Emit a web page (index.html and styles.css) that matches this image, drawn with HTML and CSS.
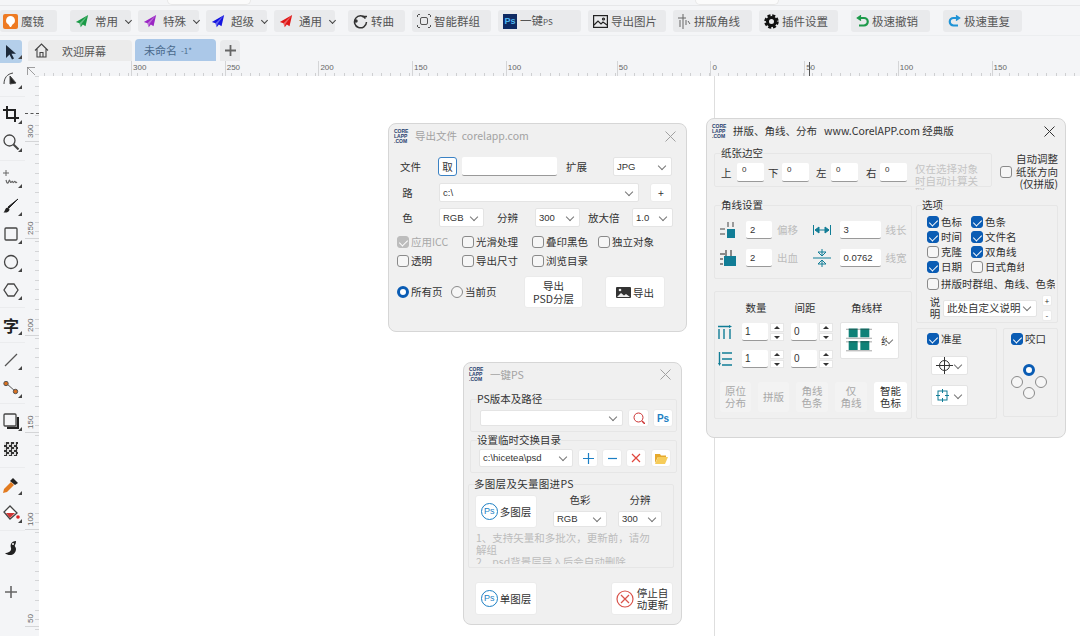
FILE: index.html
```html
<!DOCTYPE html>
<html lang="zh-CN">
<head>
    <meta charset="UTF-8">
    <title>CorelDRAW 插件</title>
    <link rel="stylesheet" href="styles.css">
</head>
<body>
    <svg class="defs" width="0" height="0">
        <symbol id="plane" viewBox="0 0 16 16"><path d="M15 1 1 9l4 1.5L6.500 15l2.500-3 3 2z" fill="currentColor"/><path d="M15 1 5 10.500l1.500 4.500 1-4z" fill="#fff" opacity=".35"/></symbol>
        <symbol id="close" viewBox="0 0 11 11"><path d="m.5.5 10 10M10.500.5l-10 10" fill="none" stroke="currentColor"/></symbol>
    </svg>

    <div class="top-strip"><span class="strip-tab tab-a"></span><span class="strip-tab tab-b"></span></div>

    <div class="toolbar">
        <div class="tool-btn w57 first"><svg width="15" height="15" viewBox="0 0 15 15"><rect width="15" height="15" rx="2" fill="#ee7a22"/><path d="M7.500 2a4.500 4.500 0 0 1 2 8.500L8 13H7l-1.500-2.500A4.500 4.500 0 0 1 7.500 2z" fill="#fff"/></svg><span>魔镜</span></div>
        <div class="tool-btn w61 gap-l"><svg class="c-green" width="14" height="14"><use href="#plane"/></svg><span class="pad-l">常用</span><i class="chev"></i></div>
        <div class="tool-btn w61"><svg class="c-purple" width="14" height="14"><use href="#plane"/></svg><span class="pad-l">特殊</span><i class="chev"></i></div>
        <div class="tool-btn w61"><svg class="c-blue" width="14" height="14"><use href="#plane"/></svg><span class="pad-l">超级</span><i class="chev"></i></div>
        <div class="tool-btn w61"><svg class="c-red" width="14" height="14"><use href="#plane"/></svg><span class="pad-l">通用</span><i class="chev"></i></div>
        <div class="tool-btn w57 gap-l"><svg width="15" height="15" viewBox="0 0 15 15" fill="none" stroke="#333" stroke-width="1.500"><path d="M12.500 4.500A6 6 0 1 0 13.500 8"/><path d="M9 2.500h5"/><circle cx="3" cy="7" r="1" fill="#333"/></svg><span>转曲</span></div>
        <div class="tool-btn w79"><svg width="14" height="14" viewBox="0 0 14 14" fill="none" stroke="#555"><rect x="3.500" y="3.500" width="7" height="7" rx="1.500"/><path d="M.5 3V.5H3M11 .5h2.500V3M13.500 11v2.500H11M3 13.500H.5V11" stroke-dasharray="2 1"/></svg><span>智能群组</span></div>
        <div class="tool-btn w83"><span class="ps-logo">Ps</span><span>一键<small>PS</small></span></div>
        <div class="tool-btn w78"><svg width="15" height="13" viewBox="0 0 15 13" fill="none" stroke="#222" stroke-width="1.200"><rect x=".6" y=".6" width="13.800" height="11.800"/><path d="m1 10 4-4 3 3 2-2 4 3"/><circle cx="10.500" cy="4" r="1"/></svg><span>导出图片</span></div>
        <div class="tool-btn w79"><svg width="13" height="15" viewBox="0 0 13 15" fill="none" stroke="#666"><path d="M5 0v15M0 4h8M2 6v7M8 6v5M10 7l2 3"/></svg><span>拼版角线</span></div>
        <div class="tool-btn w79"><svg width="15" height="15" viewBox="0 0 15 15" fill="none" stroke="#111"><circle cx="7.500" cy="7.500" r="4" stroke-width="3"/><circle cx="7.500" cy="7.500" r="6" stroke-width="2.500" stroke-dasharray="3 1.710"/></svg><span>插件设置</span></div>
        <div class="tool-btn w79 gap-l"><svg width="13" height="13" viewBox="0 0 13 13" fill="none" stroke="#1d9a4a" stroke-width="2.200"><path d="M4 3h4a3.500 3.500 0 0 1 0 7.500H3"/><path d="M5 .5 1.500 3 5 5.500" stroke-width="1.500" fill="#1d9a4a"/></svg><span>极速撤销</span></div>
        <div class="tool-btn w79 gap-l"><svg width="13" height="13" viewBox="0 0 13 13" fill="none" stroke="#1f93d6" stroke-width="2.200"><path d="M9 3H5.500a3.500 3.500 0 0 0 0 7.500H10"/><path d="m8 .5 3.500 2.500L8 5.500" stroke-width="1.500" fill="#1f93d6"/></svg><span>极速重复</span></div>
    </div>

    <div class="main">
        <div class="sidebar">
            <div class="side-item active"><svg width="14" height="16" viewBox="0 0 14 16"><path d="M2 1v13l3.500-3.500 2.500 5 2-1-2.500-4.800H12z" fill="#1d2a3a"/></svg></div>
            <div class="side-item"><svg width="16" height="16" viewBox="0 0 16 16" fill="none" stroke="#444"><path d="M1 13c0-6 3-10 9-11"/><path d="m7 5 6 7-6 1z" fill="#222"/></svg></div>
            <div class="side-item group-start"><svg width="16" height="16" viewBox="0 0 16 16" fill="none" stroke="#222" stroke-width="2"><path d="M4 0v12h12M0 4h12v12"/></svg></div>
            <div class="side-item"><svg width="16" height="16" viewBox="0 0 16 16" fill="none" stroke="#444" stroke-width="1.300"><circle cx="6.500" cy="6.500" r="5.500"/><path d="m10.500 10.500 5 5" stroke-width="2"/></svg></div>
            <div class="side-item group-start wide-gap"><svg width="17" height="16" viewBox="0 0 17 16" fill="none" stroke="#666"><path d="M3 0v6M0 3h6"/><path d="M3 10c1 4 2 4 3 1s1 3 2.500 1 1 2 2.500 0 1 2 3 0" stroke-width="1.200"/></svg></div>
            <div class="side-item"><svg width="16" height="16" viewBox="0 0 16 16"><path d="M15 1 6 10l-1-1z" fill="#222" stroke="#222"/><path d="M5 9.500c-3 0-2.500 3-4.500 5 3 .5 6-.5 6-3.500z" fill="#222"/></svg></div>
            <div class="side-item"><svg width="15" height="15" viewBox="0 0 15 15" fill="none" stroke="#444" stroke-width="1.300"><rect x="1" y="1" width="12" height="12" rx="1"/></svg></div>
            <div class="side-item"><svg width="16" height="16" viewBox="0 0 16 16" fill="none" stroke="#444" stroke-width="1.300"><circle cx="8" cy="8" r="6.500"/></svg></div>
            <div class="side-item"><svg width="16" height="16" viewBox="0 0 16 16" fill="none" stroke="#444" stroke-width="1.300"><path d="M5 2h6l4 6-4 6H5L1 8z"/></svg></div>
            <div class="side-item group-start text-tool">字</div>
            <div class="side-item group-start"><svg width="14" height="14" viewBox="0 0 14 14" stroke="#555" stroke-width="1.200"><path d="M1 13 13 1"/></svg></div>
            <div class="side-item"><svg width="16" height="14" viewBox="0 0 16 14" stroke="#555"><path d="m3 2 10 9"/><circle cx="3" cy="2.500" r="2.200" fill="#d9701f"/><circle cx="12.500" cy="10.500" r="2.200" fill="#d9701f"/></svg></div>
            <div class="side-item group-start small-gap"><svg width="16" height="16" viewBox="0 0 16 16" fill="none"><path d="M4 15h11V4" stroke="#222" stroke-width="2.500"/><rect x="1" y="1" width="12" height="12" rx="1" stroke="#444" stroke-width="1.300"/></svg></div>
            <div class="side-item no-corner"><i class="checker"></i></div>
            <div class="side-item group-start wide-gap"><svg width="16" height="16" viewBox="0 0 16 16"><path d="M10 1l5 5-3 2-5-4z" fill="#222"/><path d="M8 5 1 12l-1 4 4-1 7-7z" fill="#e27b20"/></svg></div>
            <div class="side-item"><svg width="17" height="16" viewBox="0 0 17 16"><path d="M7 1 1 7l6 7 7-6z" fill="#fff" stroke="#444" stroke-width="1.300"/><path d="M3 8h9l-5 5z" fill="#cf3535"/><circle cx="15" cy="12" r="1.800" fill="#d22"/></svg></div>
            <div class="side-item group-start no-corner"><svg width="14" height="17" viewBox="0 0 14 17"><path d="M12 1C7 1 6 5 7 8c1 3-3 5-6 5 4 4 11 2 11-4 0-2-2-3-1-4 .5-1 1-2 1-4z" fill="#222"/><circle cx="9" cy="4" r="1" fill="#fff"/></svg></div>
            <div class="side-item add-tool no-corner"><svg width="12" height="12" viewBox="0 0 12 12" stroke="#666" stroke-width="1.600"><path d="M6 0v12M0 6h12"/></svg></div>
        </div>

        <div class="workspace">
            <div class="tabs">
                <div class="tab home-tab"><svg width="15" height="15" viewBox="0 0 15 15" fill="none" stroke="#444" stroke-width="1.100"><path d="M1 7.500 7.500 1 14 7.500M3 6v8h9V6M6 14V9.500h3V14"/></svg><span>欢迎屏幕</span></div>
                <div class="tab current-tab">未命名 <small>-1*</small></div>
                <div class="tab new-tab"><svg width="11" height="11" viewBox="0 0 11 11" stroke="#666" stroke-width="1.800"><path d="M5.500 0v11M0 5.500h11"/></svg></div>
            </div>
            <div class="h-ruler">
                <span class="ruler-corner"><svg width="9" height="9" viewBox="0 0 9 9" fill="none" stroke="#888"><path d="M0 .5h8M.5 0v8M1 1l7 7" stroke-width=".8"/></svg></span>
                <span class="h-first"></span>
                <span class="h-cell">300</span><span class="h-cell">250</span><span class="h-cell">200</span><span class="h-cell">150</span><span class="h-cell h-wide">100</span><span class="h-cell">50</span><span class="h-cell">0</span><span class="h-cell">50</span><span class="h-cell">100</span><span class="h-cell">150</span>
                <i class="h-marker"></i>
            </div>
            <div class="canvas-row">
                <div class="v-ruler">
                    <span class="v-first">300</span><span class="v-cell">250</span><span class="v-cell">200</span><span class="v-cell">150</span><span class="v-cell">100</span><span class="v-cell">50</span>
                    <i class="v-marker"></i>
                </div>
                <div class="canvas"><i class="page-edge"></i></div>
            </div>
        </div>
    </div>

    <!-- 导出文件 -->
    <div class="dialog export-dialog">
        <div class="dlg-title faded">
            <span class="logo">CORE<br>LAPP<br>.COM</span>
            <span class="title-text">导出文件&nbsp; corelapp.com</span>
            <svg class="close" width="11" height="11"><use href="#close"/></svg>
        </div>
        <div class="export-body">
            <div class="row h19 mt6">
                <label class="w38">文件</label><button class="btn blue-outline w19 fill-h">取</button><div class="input w95 ml5 fill-h"></div>
                <label class="w47 ml9">扩展</label><div class="select w59 fill-h">JPG</div>
            </div>
            <div class="row h19 mt7">
                <label class="w39">&nbsp;路</label><div class="select w200 fill-h">c:\</div><button class="btn w22 ml11 fill-h">+</button>
            </div>
            <div class="row h19 mt6">
                <label class="w39">&nbsp;色</label><div class="select w45 fill-h">RGB</div>
                <label class="w38 ml13">分辨</label><div class="select w45 fill-h">300</div>
                <label class="w44 ml8">放大倍</label><div class="select w41 fill-h">1.0</div>
            </div>
            <div class="check-grid export-checks">
                <label class="chk muted"><i class="cb disabled"></i>应用ICC</label>
                <label class="chk"><i class="cb"></i>光滑处理</label>
                <label class="chk"><i class="cb"></i>叠印黑色</label>
                <label class="chk"><i class="cb"></i>独立对象</label>
                <label class="chk"><i class="cb"></i>透明</label>
                <label class="chk"><i class="cb"></i>导出尺寸</label>
                <label class="chk"><i class="cb"></i>浏览目录</label>
            </div>
            <div class="row export-actions">
                <label class="chk w54"><i class="rb on"></i>所有页</label>
                <label class="chk w73"><i class="rb"></i>当前页</label>
                <button class="btn big w59">导出<br>PSD分层</button>
                <button class="btn big w60 ml22 inline-icon"><svg width="15" height="11" viewBox="0 0 15 11"><rect width="15" height="11" rx="1" fill="#333"/><path d="m1 10 4-4 3 2.500 2-1.500 4 3z" fill="#eee"/><circle cx="4" cy="3" r="1.300" fill="#eee"/></svg>导出</button>
            </div>
        </div>
    </div>

    <!-- 一键PS -->
    <div class="dialog ps-dialog">
        <div class="dlg-title faded">
            <span class="logo">CORE<br>LAPP<br>.COM</span>
            <span class="title-text">一键PS</span>
            <svg class="close" width="11" height="11"><use href="#close"/></svg>
        </div>
        <fieldset class="group ps-path">
            <legend>PS版本及路径</legend>
            <div class="row">
                <div class="select w143 h16"></div>
                <button class="btn icon-btn w21 ml5"><svg width="12" height="12" viewBox="0 0 12 12" fill="none" stroke="#c33"><circle cx="5.500" cy="5.500" r="4.500"/><path d="m9 9 3 3" stroke-width="1.500"/></svg></button>
                <button class="btn icon-btn w20 ml4 ps-text">Ps</button>
            </div>
        </fieldset>
        <fieldset class="group ps-temp">
            <legend>设置临时交换目录</legend>
            <div class="row">
                <div class="select w94 h17">c:\hicetea\psd</div>
                <button class="btn icon-btn w20 ml5"><svg width="11" height="11" viewBox="0 0 11 11" stroke="#1c7fc4" stroke-width="1.200"><path d="M5.500 0v11M0 5.500h11"/></svg></button>
                <button class="btn icon-btn w20 ml4"><svg width="11" height="11" viewBox="0 0 11 11" stroke="#1c7fc4" stroke-width="1.200"><path d="M1 5.500h9"/></svg></button>
                <button class="btn icon-btn w20 ml4"><svg width="10" height="10" viewBox="0 0 10 10" stroke="#e0463c" stroke-width="1.200"><path d="m1 1 8 8M9 1 1 9"/></svg></button>
                <button class="btn icon-btn w20 ml5"><svg width="13" height="11" viewBox="0 0 13 11"><path d="M0 1h5l1 1.500h5V4H3L0 10z" fill="#e6a92c"/><path d="M3 4h10l-3 7H0z" fill="#f6cc5a"/></svg></button>
            </div>
        </fieldset>
        <fieldset class="group ps-layers">
            <legend>多图层及矢量图进PS</legend>
            <div class="row align-top">
                <button class="btn ps-big"><span class="ps-badge">Ps</span>多图层</button>
                <div class="pick-col ml16"><label>色彩</label><div class="select w54 h16">RGB</div></div>
                <div class="pick-col ml11"><label>分辨</label><div class="select w44 h16">300</div></div>
            </div>
            <p class="ps-note">1、支持矢量和多批次，更新前，请勿解组<br>2、psd背景层导入后会自动删除</p>
        </fieldset>
        <div class="row ps-bottom">
            <button class="btn ps-big"><span class="ps-badge">Ps</span>单图层</button>
            <button class="btn ps-big stop-btn"><svg width="18" height="18" viewBox="0 0 18 18" fill="none" stroke="#d9534a" stroke-width="1.200"><circle cx="9" cy="9" r="8"/><path d="m5 5 8 8M13 5l-8 8"/></svg><span>停止自<br>动更新</span></button>
        </div>
    </div>

    <!-- 拼版、角线、分布 -->
    <div class="dialog imposition-dialog">
        <div class="dlg-title">
            <span class="logo">CORE<br>LAPP<br>.COM</span>
            <span class="title-text dark">拼版、角线、分布 &nbsp; www.CorelAPP.com 经典版</span>
            <svg class="close dark" width="11" height="11"><use href="#close"/></svg>
        </div>
        <div class="row align-top margin-line">
            <fieldset class="group margin-group">
                <legend>纸张边空</legend>
                <div class="row margin-row">
                    <label class="w16">上</label><div class="input w27 fill-h small-num">0</div>
                    <label class="w14 ml4">下</label><div class="input w27 fill-h small-num">0</div>
                    <label class="w15 ml7">左</label><div class="input w27 fill-h small-num">0</div>
                    <label class="w14 ml8">右</label><div class="input w27 fill-h small-num">0</div>
                    <p class="margin-note">仅在选择对象时自动计算关联</p>
                </div>
            </fieldset>
            <label class="chk auto-fit"><i class="cb"></i><span>自动调整<br>纸张方向<br>(仅拼版)</span></label>
        </div>
        <div class="row align-top imposition-cols">
            <div class="left-col">
                <fieldset class="group marks-group">
                    <legend>角线设置</legend>
                    <div class="row marks-row first-marks">
                        <svg class="ic" width="16" height="16" viewBox="0 0 16 16"><rect x="7" y="7" width="8" height="9" fill="#117d96"/><path d="M8 0v5M13 0v5M0 7h5M0 12h5" stroke="#444"/></svg>
                        <div class="input w26 ml10 fill-h">2</div><span class="hint w26 ml5">偏移</span>
                        <svg class="ic ml10" width="18" height="12" viewBox="0 0 18 12" stroke="#117d96" fill="#117d96"><path d="M.5 1v10M17.500 1v10M2 6h14" fill="none"/><path d="m2 6 4-3v6zM16 6l-4-3v6z"/></svg>
                        <div class="input w41 ml9 fill-h">3</div><span class="hint w26 ml5">线长</span>
                    </div>
                    <div class="row marks-row second-marks">
                        <svg class="ic" width="16" height="16" viewBox="0 0 16 16"><rect x="4" y="6" width="12" height="10" fill="#117d96"/><path d="M6 0v6M11 0v6M0 4h5M0 9h3M0 14h3" stroke="#222"/></svg>
                        <div class="input w26 ml10 fill-h">2</div><span class="hint w26 ml5">出血</span>
                        <svg class="ic ml10" width="18" height="18" viewBox="0 0 18 18" fill="none" stroke="#117d96"><path d="M0 9h18M9 0v6M9 12v6"/><path d="m5 3 4 4 4-4zM5 15l4-4 4 4z"/></svg>
                        <div class="input w41 ml9 fill-h">0.0762</div><span class="hint w26 ml5">线宽</span>
                    </div>
                </fieldset>
                <div class="group layout-group">
                    <div class="layout-grid">
                        <span></span><label class="grid-head">数量</label><label class="grid-head">间距</label><label class="grid-head style-head">角线样式</label>
                        <svg width="14" height="14" viewBox="0 0 14 14" fill="none" stroke="#117d96" stroke-width="1.400"><path d="M1 4v10M6 4v10M12 4v10M0 1.500h12"/><path d="m14 1.500-3-1.500v3z" fill="#117d96" stroke="none"/></svg>
                        <div class="spin"><div class="input w26 fill-h">1</div><div class="spinner"><i class="up"></i><i class="down"></i></div></div>
                        <div class="spin"><div class="input w26 fill-h">0</div><div class="spinner"><i class="up"></i><i class="down"></i></div></div>
                        <div class="select style-select"><svg width="26" height="27" viewBox="0 0 29 29"><path d="M3 1h10v10H3zM16 1h10v10H16zM3 15h10v10H3zM16 15h10v10H16z" fill="#0f8278"/><path d="M0 2h29M0 12h29M0 16h29M0 26h29" stroke="#333" stroke-width=".5"/></svg><span class="clip-glyph">线</span></div>
                        <svg class="second-row" width="14" height="14" viewBox="0 0 14 14" fill="none" stroke="#117d96" stroke-width="1.400"><path d="M4 1h10M4 7h10M4 13h10M1.500 0v12"/><path d="m1.500 14-1.500-3h3z" fill="#117d96" stroke="none"/></svg>
                        <div class="spin second-row"><div class="input w26 fill-h">1</div><div class="spinner"><i class="up"></i><i class="down"></i></div></div>
                        <div class="spin second-row"><div class="input w26 fill-h">0</div><div class="spinner"><i class="up"></i><i class="down"></i></div></div>
                    </div>
                    <div class="row action-row">
                        <button class="btn act off w31">原位<br>分布</button>
                        <button class="btn act off w31">拼版</button>
                        <button class="btn act off w32">角线<br>色条</button>
                        <button class="btn act off w32">仅<br>角线</button>
                        <button class="btn act w33">智能<br>色标</button>
                    </div>
                </div>
            </div>
            <div class="right-col">
                <fieldset class="group options-group">
                    <legend>选项</legend>
                    <div class="option-grid">
                        <label class="chk"><i class="cb on"></i>色标</label><label class="chk"><i class="cb on"></i>色条</label>
                        <label class="chk"><i class="cb on"></i>时间</label><label class="chk"><i class="cb on"></i>文件名</label>
                        <label class="chk"><i class="cb"></i>克隆</label><label class="chk"><i class="cb on"></i>双角线</label>
                        <label class="chk"><i class="cb on"></i><span class="clip-a">日期</span></label><label class="chk"><i class="cb"></i><span class="clip-b">日式角线</span></label>
                    </div>
                    <label class="chk group-line"><i class="cb"></i><span class="clip-c">拼版时群组、角线、色条等</span></label>
                    <div class="row note-row">
                        <label class="note-label">说<br>明</label>
                        <div class="select note-select"><span>此处自定义说明</span></div>
                        <div class="mini-stack"><button class="btn mini">+</button><button class="btn mini">-</button></div>
                    </div>
                </fieldset>
                <div class="row align-top target-row">
                    <div class="group target-group">
                        <label class="chk"><i class="cb on"></i>准星</label>
                        <div class="select target-select h19"><svg width="17" height="17" viewBox="0 0 17 17" fill="none" stroke="#333"><circle cx="8.500" cy="8.500" r="5"/><path d="M8.500 0v17M0 8.500h17"/></svg></div>
                        <div class="select target-select h21"><svg width="13" height="13" viewBox="0 0 13 13" fill="none" stroke="#117d96"><rect x="2" y="2" width="9" height="9"/><path d="M6.500 0v4M6.500 9v4M0 6.500h4M9 6.500h4"/></svg></div>
                    </div>
                    <div class="group bite-group">
                        <label class="chk"><i class="cb on"></i>咬口</label>
                        <div class="bite-grid">
                            <i class="rb on bite-top"></i><i class="rb bite-left"></i><i class="rb bite-right"></i><i class="rb bite-bottom"></i>
                        </div>
                    </div>
                </div>
            </div>
        </div>
    </div>
</body>
</html>
```
FILE: styles.css
```css
* {
    box-sizing: border-box;
}

html, body {
    margin: 0;
    padding: 0;
    height: 636px;
    overflow: hidden;
}

body {
    font-family: "Noto Sans CJK SC", "Liberation Sans", sans-serif;
    font-size: 11px;
    color: #333;
    background-color: #f4f5f7;
    position: relative;
}

.defs {
    position: absolute;
}

/* top bars */
.top-strip {
    height: 6px;
    border-bottom: 1px solid #e6e7e9;
    display: flex;
}

.strip-tab {
    height: 5px;
    background-color: #fbfbfb;
    border: 1px solid #e8e8e8;
    border-top: none;
    border-radius: 0 0 5px 5px;
}

.tab-a {
    width: 84px;
    margin-left: 167px;
}

.tab-b {
    width: 84px;
    margin-left: 444px;
}

.toolbar {
    height: 30px;
    padding-top: 4px;
    display: flex;
    gap: 7px;
    border-bottom: 1px solid #eceef0;
}

.tool-btn {
    height: 22px;
    background-color: #e9eaec;
    border-radius: 3px;
    display: flex;
    align-items: center;
    gap: 3px;
    padding-left: 5px;
    font-size: 11.5px;
    color: #555;
    line-height: 22px;
    flex-shrink: 0;
    white-space: nowrap;
}

.tool-btn small {
    font-size: 8px;
}

.first {
    padding-left: 3px;
}

.gap-l {
    margin-left: 6px;
}

.pad-l {
    margin-left: 3px;
}

.chev {
    width: 5px;
    height: 5px;
    margin: -2px 0 0 5px;
    border-right: 1px solid #444;
    border-bottom: 1px solid #444;
    transform: rotate(45deg);
}

.c-green { color: #1a9a46; }
.c-purple { color: #9a26c4; }
.c-blue { color: #1414e0; }
.c-red { color: #e01616; }

.ps-logo {
    width: 14px;
    height: 15px;
    background-color: #0e2a63;
    color: #4fb6f0;
    font-family: "Liberation Sans", sans-serif;
    font-size: 9px;
    font-weight: bold;
    line-height: 15px;
    text-align: center;
}

/* main area */
.main {
    display: flex;
    height: 600px;
}

.sidebar {
    width: 25px;
    padding-top: 1px;
    flex-shrink: 0;
}

.side-item {
    height: 28px;
    width: 22px;
    display: flex;
    align-items: center;
    justify-content: center;
    position: relative;
}

.side-item::after {
    content: "";
    position: absolute;
    right: 0;
    bottom: 4px;
    border-left: 4px solid transparent;
    border-bottom: 4px solid #444;
}

.no-corner::after {
    display: none;
}

.active {
    height: 23px;
    margin: 3px 0 2px;
    background-color: #b4cfea;
    border-radius: 0 3px 3px 0;
}

.group-start {
    margin-top: 7px;
}

.group-start::before {
    content: "";
    position: absolute;
    left: 0;
    width: 25px;
    top: -4px;
    border-top: 1px solid #ebecee;
}

.wide-gap {
    margin-top: 8px;
}

.small-gap {
    margin-top: 5px;
}

.text-tool {
    font-size: 16px;
    font-weight: bold;
    color: #222;
}

.checker {
    width: 14px;
    height: 14px;
    background: repeating-conic-gradient(#333 0 25%, #ddd 0 50%) 0 0 / 5px 5px;
}

.add-tool {
    margin-top: 16px;
}

.workspace {
    flex: 1;
    display: flex;
    flex-direction: column;
}

.tabs {
    height: 25px;
    display: flex;
    align-items: flex-end;
    padding-left: 3px;
    gap: 3px;
}

.tab {
    height: 21px;
    border-radius: 4px 4px 0 0;
    background-color: #ebebeb;
    display: flex;
    align-items: center;
    font-size: 11px;
    color: #555;
}

.home-tab {
    width: 104px;
    padding-left: 6px;
}

.home-tab span {
    margin-left: 13px;
}

.current-tab {
    width: 81px;
    height: 22px;
    padding-left: 9px;
    background-color: #abc8e8;
    color: #4a6a8c;
}

.current-tab small {
    font-size: 8px;
    margin-left: 4px;
}

.new-tab {
    width: 20px;
    justify-content: center;
    background-color: #e9eaec;
    margin-left: 1px;
}

.h-ruler {
    height: 15px;
    display: flex;
    position: relative;
    background-image: repeating-linear-gradient(to right, #cfd0d2 0 1px, transparent 1px 9.37px);
    background-size: 100% 3px;
    background-position: 0 100%;
    background-repeat: no-repeat;
}

.ruler-corner {
    width: 15px;
    height: 15px;
    padding: 2px;
    background-color: #f4f5f7;
}

.h-first {
    width: 91px;
}

.h-cell {
    width: 93.7px;
    border-left: 1px solid #d4d5d7;
    padding-left: 1px;
    font-size: 8px;
    color: #666;
    line-height: 13px;
    font-family: "Liberation Sans", sans-serif;
}

.h-wide {
    width: 111px;
}

.h-marker {
    position: absolute;
    left: 784px;
    top: 1px;
    width: 1px;
    height: 14px;
    background-color: #555;
}

.canvas-row {
    flex: 1;
    display: flex;
}

.v-ruler {
    width: 14px;
    position: relative;
    background-image: repeating-linear-gradient(to bottom, #d4d5d7 0 1px, transparent 1px 9.7px);
    background-size: 4px 100%;
    background-position: 100% 0;
    background-repeat: no-repeat;
}

.v-first, .v-cell {
    display: flex;
    writing-mode: vertical-rl;
    rotate: 180deg;
    font-size: 8px;
    color: #666;
    font-family: "Liberation Sans", sans-serif;
    line-height: 11px;
    width: 14px;
    align-items: flex-start;
    justify-content: flex-start;
    border-top: 1px solid #d4d5d7;
    padding-top: 3px;
}

.v-first {
    height: 66px;
}

.v-cell {
    height: 97px;
}

.v-marker {
    position: absolute;
    left: 0;
    top: 37px;
    width: 14px;
    border-top: 1px dashed #555;
}

.canvas {
    flex: 1;
    background-color: #fff;
    position: relative;
}

.page-edge {
    position: absolute;
    left: 675px;
    top: 0;
    bottom: 0;
    width: 1px;
    background-color: #dedede;
}

/* dialogs are floating windows */
.dialog {
    position: absolute;
    background-color: #f0f0f0;
    border: 1px solid #d6d6d6;
    border-radius: 8px;
    font-size: 10.5px;
    line-height: 14px;
    color: #333;
}

.export-dialog {
    left: 388px;
    top: 123px;
    width: 299px;
    height: 209px;
}

.ps-dialog {
    left: 463px;
    top: 362px;
    width: 219px;
    height: 263px;
}

.imposition-dialog {
    left: 706px;
    top: 118px;
    width: 360px;
    height: 320px;
}

.dlg-title {
    height: 27px;
    display: flex;
    align-items: center;
    padding: 0 10px 3px 5px;
    position: relative;
}

.ps-dialog .dlg-title {
    height: 25px;
    padding-bottom: 2px;
}

.logo {
    font-family: "Liberation Sans", sans-serif;
    font-size: 5px;
    font-weight: bold;
    line-height: 5px;
    color: #24406e;
    width: 16px;
}

.title-text {
    margin-left: 5px;
    font-size: 10.5px;
    color: #a2a2a2;
}

.title-text.dark {
    color: #333;
}

.close {
    margin-left: auto;
    color: #a0a0a0;
}

.close.dark {
    color: #333;
}

.row {
    display: flex;
    align-items: center;
}

.align-top {
    align-items: flex-start;
}

label {
    display: block;
    flex-shrink: 0;
}

.btn {
    background-color: #fff;
    border: 1px solid #ebebeb;
    border-radius: 3px;
    font-family: inherit;
    font-size: 10.5px;
    line-height: 13px;
    color: #333;
    padding: 0;
    flex-shrink: 0;
}

.blue-outline {
    border-color: #3b82c4;
}

.input {
    background-color: #fff;
    border-bottom: 1px solid #999;
    border-radius: 2px;
    padding: 2px 0 0 3px;
    font-size: 10px;
    line-height: 14px;
    flex-shrink: 0;
    font-family: "Liberation Sans", sans-serif;
}

.select {
    background-color: #fff;
    border: 1px solid #e4e4e4;
    border-radius: 2px;
    padding-left: 3px;
    font-size: 9.5px;
    display: flex;
    align-items: center;
    flex-shrink: 0;
    position: relative;
    font-family: "Liberation Sans", "Noto Sans CJK SC", sans-serif;
}

.select::after {
    content: "";
    position: absolute;
    right: 6px;
    top: 50%;
    width: 5px;
    height: 5px;
    margin-top: -4px;
    border-right: 1px solid #777;
    border-bottom: 1px solid #777;
    transform: rotate(45deg);
}

.fill-h {
    align-self: stretch;
}

.h16 { height: 16px; }
.h17 { height: 18px; }
.h19 { height: 19px; }
.h21 { height: 21px; }

.w14 { width: 14px; }
.w15 { width: 15px; }
.w16 { width: 16px; }
.w19 { width: 19px; }
.w20 { width: 20px; }
.w21 { width: 21px; }
.w22 { width: 22px; }
.w26 { width: 26px; }
.w27 { width: 27px; }
.w31 { width: 31px; }
.w32 { width: 32px; }
.w33 { width: 33px; }
.w38 { width: 38px; }
.w39 { width: 39px; }
.w41 { width: 41px; }
.w44 { width: 44px; }
.w45 { width: 45px; }
.w47 { width: 47px; }
.w54 { width: 54px; }
.w57 { width: 57px; }
.w59 { width: 59px; }
.w60 { width: 60px; }
.w61 { width: 61px; }
.w73 { width: 73px; }
.w78 { width: 78px; }
.w79 { width: 79px; }
.w83 { width: 83px; }
.w94 { width: 94px; }
.w95 { width: 95px; }
.w143 { width: 143px; }
.w200 { width: 200px; }

.ml4 { margin-left: 4px; }
.ml5 { margin-left: 5px; }
.ml7 { margin-left: 7px; }
.ml8 { margin-left: 8px; }
.ml9 { margin-left: 9px; }
.ml10 { margin-left: 10px; }
.ml11 { margin-left: 11px; }
.ml13 { margin-left: 13px; }
.ml16 { margin-left: 16px; }
.ml22 { margin-left: 22px; }

.mt6 { margin-top: 6px; }
.mt7 { margin-top: 7px; }

.chk {
    display: flex;
    align-items: center;
    gap: 2px;
    font-size: 10.5px;
    white-space: nowrap;
}

.muted {
    color: #a8a8a8;
}

.cb {
    width: 12px;
    height: 12px;
    border: 1px solid #8a8a8a;
    border-radius: 3px;
    background-color: #f6f6f6;
    flex-shrink: 0;
    position: relative;
    display: block;
}

.cb.on {
    background-color: #0a5cb4;
    border-color: #0a5cb4;
}

.cb.disabled {
    background-color: #bdbdbd;
    border-color: #bdbdbd;
}

.cb.on::after, .cb.disabled::after {
    content: "";
    position: absolute;
    left: 3px;
    top: 1px;
    width: 4px;
    height: 7px;
    border-right: 1.5px solid #fff;
    border-bottom: 1.5px solid #fff;
    transform: rotate(45deg);
}

.rb {
    width: 12px;
    height: 12px;
    border-radius: 50%;
    border: 1px solid #8a8a8a;
    background-color: #f6f6f6;
    display: block;
    flex-shrink: 0;
}

.rb.on {
    border: 3.5px solid #0a5cb4;
    background-color: #fff;
}

/* export dialog */
.export-body {
    padding-left: 11px;
}

.check-grid {
    display: grid;
    margin: 5px 0 0 -3px;
    grid-template-columns: 65px 70px 66px auto;
    grid-auto-rows: 19px;
    align-items: center;
}

.export-actions {
    margin: 6px 0 0 -3px;
}

.big {
    height: 32px;
}

.inline-icon {
    display: flex;
    align-items: center;
    justify-content: center;
    gap: 2px;
}

/* one-click ps dialog */
.group {
    border: 1px solid #e6e6e6;
    border-radius: 2px;
    margin: 0;
    padding: 0;
    min-width: 0;
}

legend {
    padding: 0;
    font-size: 10.5px;
    line-height: 14px;
}

.ps-path {
    margin: 4px 0 0 6px;
    width: 207px;
    height: 40px;
    padding: 3px 0 0 9px;
}

.ps-path legend {
    margin-left: -3px;
}

.icon-btn {
    height: 18px;
    display: flex;
    align-items: center;
    justify-content: center;
}

.ps-text {
    color: #1c7fc4;
    font-family: "Liberation Sans", sans-serif;
    font-weight: bold;
    font-size: 10px;
}

.ps-temp {
    margin: 1px 0 0 6px;
    width: 207px;
    height: 40px;
    padding: 2px 0 0 8px;
}

.ps-temp legend {
    margin-left: -2px;
}

.ps-layers {
    margin: 4px 0 0 4px;
    width: 206px;
    height: 91px;
    padding: 4px 0 0 6px;
}

.ps-layers legend {
    margin-left: -1px;
    letter-spacing: .3px;
}

.ps-big {
    width: 62px;
    height: 33px;
    display: flex;
    align-items: center;
    justify-content: center;
    gap: 2px;
    font-size: 10.5px;
}

.ps-badge {
    width: 17px;
    height: 17px;
    border: 1px solid #1c7fc4;
    border-radius: 50%;
    color: #1c7fc4;
    font-family: "Liberation Sans", sans-serif;
    font-size: 9px;
    line-height: 15px;
    text-align: center;
    background-color: #fff;
}

.pick-col {
    margin-top: -2px;
    display: flex;
    flex-direction: column;
    align-items: center;
    gap: 4px;
}

.ps-note {
    margin: 4px 0 0 1px;
    width: 180px;
    height: 32px;
    overflow: hidden;
    color: #bcbcbc;
    font-size: 10.5px;
    line-height: 12px;
}

.ps-bottom {
    margin: 14px 0 0 11px;
    width: 198px;
    justify-content: space-between;
}

.stop-btn {
    gap: 3px;
}

.stop-btn span {
    line-height: 12px;
    text-align: left;
}

/* imposition dialog */
.margin-line {
    height: 41px;
}

.margin-group {
    margin-left: 7px;
    width: 278px;
    height: 41px;
    padding: 3px 0 0 6px;
}

.margin-row {
    height: 19px;
    align-items: center;
}

.small-num {
    font-size: 8px;
    padding-left: 5px;
    padding-top: 0;
}

.margin-note {
    margin: 0 0 0 8px;
    width: 72px;
    height: 27px;
    align-self: flex-start;
    overflow: hidden;
    font-size: 10.5px;
    line-height: 12px;
    color: #c4c4c4;
}

.auto-fit {
    margin: 7px 0 0 8px;
    width: 58px;
    gap: 0;
    align-items: center;
}

.auto-fit span {
    flex: 1;
    text-align: right;
    line-height: 12.5px;
    font-size: 10.5px;
}

.imposition-cols {
    margin: 11px 0 0 7px;
}

.left-col {
    width: 198px;
}

.right-col {
    width: 142px;
    margin-left: 4px;
}

.marks-group {
    height: 81px;
    padding: 9px 0 0 5px;
}

.marks-group legend {
    margin-left: 1px;
}

.marks-row {
    height: 18px;
}

.second-marks {
    margin-top: 10px;
}

.ic {
    flex-shrink: 0;
}

.hint {
    color: #bcbcbc;
    font-size: 10.5px;
}

.marks-group .input {
    font-size: 9.5px;
    padding-left: 4px;
}

.layout-group {
    margin-top: 12px;
    height: 128px;
    padding: 9px 0 0 3px;
}

.layout-grid {
    display: grid;
    grid-template-columns: 17px 42px 42px 59px;
    column-gap: 7px;
    grid-template-rows: 14px 18px 18px;
    row-gap: 8px;
    align-items: center;
}

.grid-head {
    text-align: center;
    padding-right: 14px;
    white-space: nowrap;
}

.style-head {
    width: 31px;
    margin-left: 11px;
    padding: 0;
    overflow: hidden;
    text-align: left;
}

.spin {
    display: flex;
    gap: 2px;
    height: 18px;
}

.spinner {
    width: 14px;
    display: flex;
    flex-direction: column;
    gap: 1px;
}

.spinner i {
    flex: 1;
    background-color: #fff;
    border: 1px solid #e6e6e6;
    position: relative;
}

.spinner i::after {
    content: "";
    position: absolute;
    left: 3px;
    top: 2px;
    border-left: 3px solid transparent;
    border-right: 3px solid transparent;
}

.spinner .up::after {
    border-bottom: 3px solid #333;
}

.spinner .down::after {
    border-top: 3px solid #333;
}

.second-row {
    position: relative;
    top: 1px;
}

.style-select {
    grid-column: 4;
    grid-row: 2 / 4;
    align-self: start;
    height: 37px;
    margin-top: -1px;
    overflow: hidden;
    padding-left: 5px;
}

.clip-glyph {
    margin-left: 9px;
    width: 6px;
    overflow: hidden;
    font-size: 10.5px;
    white-space: nowrap;
    font-family: "Noto Sans CJK SC", sans-serif;
}

.action-row {
    margin: 15px 0 0 2px;
    gap: 7px;
}

.act {
    height: 30px;
    line-height: 12px;
    border: none;
}

.act.off {
    background-color: #f3f3f3;
    color: #a8a8a8;
}

.options-group {
    height: 125px;
    padding: 2px 0 0 10px;
}

.options-group legend {
    margin-left: -5px;
}

.option-grid {
    display: grid;
    grid-template-columns: 44px auto;
    grid-auto-rows: 15px;
    align-items: center;
}

.clip-a {
    width: 21px;
    overflow: hidden;
}

.clip-b {
    width: 39px;
    overflow: hidden;
}

.clip-c {
    width: 114px;
    overflow: hidden;
}

.group-line {
    margin-top: 2px;
    height: 15px;
}

.note-row {
    margin-top: 4px;
}

.note-label {
    width: 16px;
    text-align: center;
    line-height: 12px;
}

.note-select {
    width: 94px;
    height: 17px;
    font-size: 10.5px;
    font-family: "Noto Sans CJK SC", sans-serif;
    white-space: nowrap;
}

.note-select span {
    width: 74px;
    overflow: hidden;
}

.mini-stack {
    margin-left: 5px;
    display: flex;
    flex-direction: column;
    gap: 4px;
}

.mini {
    width: 10px;
    height: 11px;
    font-size: 8px;
    line-height: 7px;
    border-radius: 2px;
}

.target-row {
    margin-top: 5px;
    gap: 6px;
}

.target-group {
    width: 81px;
    height: 91px;
    padding: 3px 0 0 10px;
}

.target-select {
    width: 37px;
    margin: 10px 0 0 4px;
}

.target-select + .target-select {
    margin-top: 10px;
}

.target-select svg {
    margin-left: 1px;
}

.bite-group {
    width: 55px;
    height: 89px;
    padding: 3px 0 0 7px;
}

.bite-grid {
    margin: 18px 0 0 0;
    display: grid;
    grid-template-columns: repeat(3, 12px);
    grid-template-rows: repeat(3, 11.5px);
}

.bite-top { grid-area: 1 / 2; }
.bite-left { grid-area: 2 / 1; }
.bite-right { grid-area: 2 / 3; }
.bite-bottom { grid-area: 3 / 2; }
```
